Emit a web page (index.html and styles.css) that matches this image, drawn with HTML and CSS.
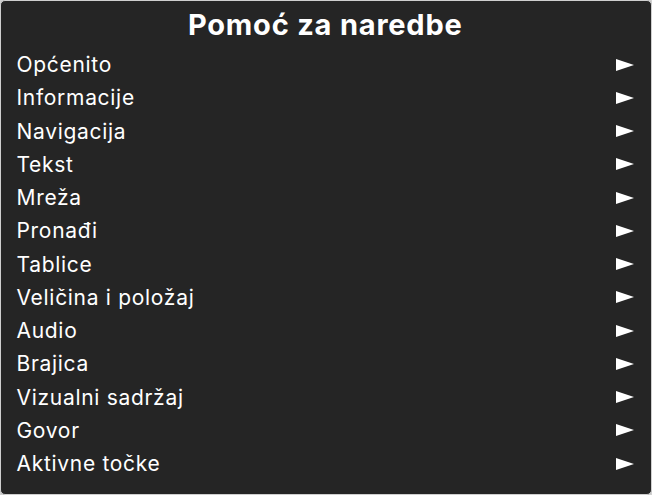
FILE: index.html
```html
<!DOCTYPE html>
<html lang="hr">
<head>
    <meta charset="UTF-8">
    <meta name="viewport" content="width=device-width, initial-scale=1.0">
    <title>Pomoć za naredbe</title>
    <link rel="stylesheet" href="styles.css">
</head>
<body>
    <div class="panel">
        <h1 class="panel-title">Pomoć za naredbe</h1>
        <ul class="menu">
            <li class="menu-item"><span>Općenito</span><span class="arrow"></span></li>
            <li class="menu-item"><span>Informacije</span><span class="arrow"></span></li>
            <li class="menu-item"><span>Navigacija</span><span class="arrow"></span></li>
            <li class="menu-item"><span>Tekst</span><span class="arrow"></span></li>
            <li class="menu-item"><span>Mreža</span><span class="arrow"></span></li>
            <li class="menu-item"><span>Pronađi</span><span class="arrow"></span></li>
            <li class="menu-item"><span>Tablice</span><span class="arrow"></span></li>
            <li class="menu-item"><span>Veličina i položaj</span><span class="arrow"></span></li>
            <li class="menu-item"><span>Audio</span><span class="arrow"></span></li>
            <li class="menu-item"><span>Brajica</span><span class="arrow"></span></li>
            <li class="menu-item"><span>Vizualni sadržaj</span><span class="arrow"></span></li>
            <li class="menu-item"><span>Govor</span><span class="arrow"></span></li>
            <li class="menu-item"><span>Aktivne točke</span><span class="arrow"></span></li>
        </ul>
    </div>
</body>
</html>
```

FILE: styles.css
```css
html, body {
    margin: 0;
    padding: 0;
    background: #d0d0d0;
}

body {
    font-family: Inter, "Noto Sans", sans-serif;
    color: #fff;
}

.panel {
    box-sizing: border-box;
    width: 652px;
    height: 495px;
    background-color: #252525;
    border: 1px solid #cfcfcf;
    border-radius: 5px;
    padding: 0 17px 0 15.5px;
}

.panel-title {
    margin: 0;
    padding: 5.5px 0 5.5px;
    text-align: center;
    font-size: 29px;
    font-weight: 700;
    line-height: 36px;
    letter-spacing: 0.8px;
}

.menu {
    list-style: none;
    margin: 0;
    padding: 0;
}

.menu-item {
    display: flex;
    justify-content: space-between;
    align-items: center;
    height: 33.25px;
    font-size: 21px;
    letter-spacing: 0.7px;
}

.arrow {
    width: 0;
    height: 0;
    border-top: 6.5px solid transparent;
    border-bottom: 6.5px solid transparent;
    border-left: 18px solid #fff;
}
```
